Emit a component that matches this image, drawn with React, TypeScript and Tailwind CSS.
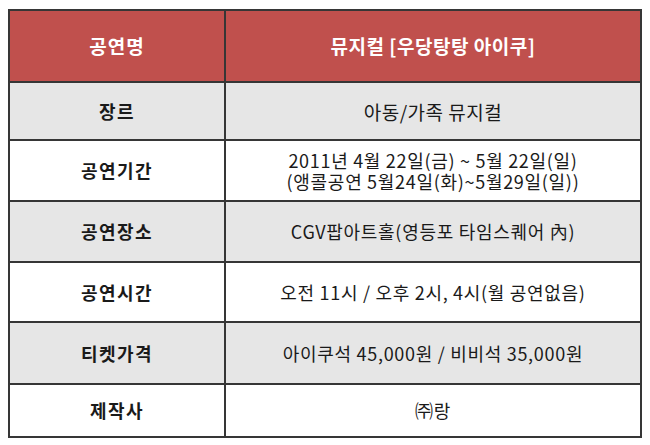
const rows = [
  { label: "장르", value: ["아동/가족 뮤지컬"], gray: true, h: "h-[58px]", big: true },
  {
    label: "공연기간",
    value: ["2011년 4월 22일(금) ~ 5월 22일(일)", "(앵콜공연 5월24일(화)~5월29일(일))"],
    gray: false,
    h: "h-[61px]",
    big: false,
  },
  { label: "공연장소", value: ["CGV팝아트홀(영등포 타임스퀘어 內)"], gray: true, h: "h-[61px]", big: false },
  { label: "공연시간", value: ["오전 11시 / 오후 2시, 4시(월 공연없음)"], gray: false, h: "h-[60px]", big: false },
  { label: "티켓가격", value: ["아이쿠석 45,000원 / 비비석 35,000원"], gray: true, h: "h-[62px]", big: false },
  { label: "제작사", value: ["㈜랑"], gray: false, h: "h-[53px]", big: false },
];

export default function App() {
  return (
    <div
      className="w-[650px] h-[445px] bg-white pl-[8px] pt-[9px]"
      style={{ fontFamily: '"Noto Sans CJK KR", "Noto Sans", sans-serif' }}
    >
      <table className="w-[634px] border-collapse border-2 border-[#363636] text-[#1a1a1a]">
        <tbody>
          <tr className="h-[72px] bg-[#c0504d] text-white">
            <td className="w-[216px] border-2 border-[#363636] text-center font-bold text-[19px] tracking-[1px]">
              공연명
            </td>
            <td className="border-2 border-[#363636] text-center font-bold text-[19px] tracking-[0.5px]">
              뮤지컬 [우당탕탕 아이쿠]
            </td>
          </tr>
          {rows.map((r) => (
            <tr key={r.label} className={`${r.h} ${r.gray ? "bg-[#e6e6e6]" : "bg-white"}`}>
              <td className="border-2 border-[#363636] text-center font-bold text-[18px] tracking-[1.5px]">
                {r.label}
              </td>
              <td
                className={`border-2 border-[#363636] text-center leading-[21px] ${
                  r.big ? "text-[19px] tracking-[0.5px]" : "text-[18px] tracking-[0.7px]"
                }`}
              >
                {r.value.map((v) => (
                  <div key={v}>{v}</div>
                ))}
              </td>
            </tr>
          ))}
        </tbody>
      </table>
    </div>
  );
}
